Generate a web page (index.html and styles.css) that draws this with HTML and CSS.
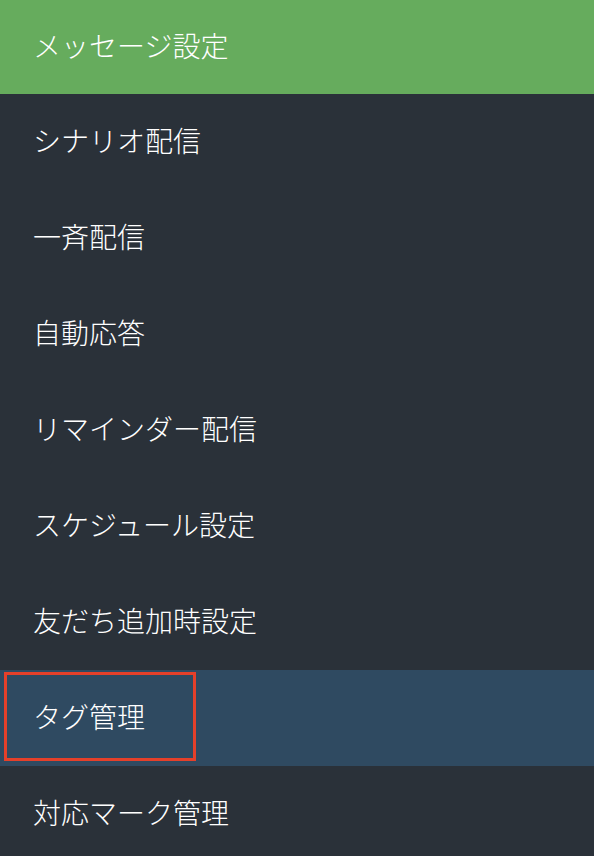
FILE: index.html
```html
<!DOCTYPE html>
<html lang="ja">
<head>
    <meta charset="UTF-8">
    <meta name="viewport" content="width=device-width, initial-scale=1.0">
    <title>メニュー</title>
    <link rel="stylesheet" href="styles.css">
</head>
<body>

    <div class="menu">
        <div class="menu-header">メッセージ設定</div>

        <!-- menu items -->
        <div class="menu-item">シナリオ配信</div>
        <div class="menu-item">一斉配信</div>
        <div class="menu-item">自動応答</div>
        <div class="menu-item">リマインダー配信</div>
        <div class="menu-item">スケジュール設定</div>
        <div class="menu-item">友だち追加時設定</div>
        <div class="menu-item active">
            <span class="highlight-box"></span>
            タグ管理
        </div>
        <div class="menu-item">対応マーク管理</div>
    </div>

</body>
</html>
```

FILE: styles.css
```css
body {
    margin: 0;
    padding: 0;
    background-color: #2a3139;
    font-family: "Noto Sans CJK JP", "Noto Sans", sans-serif;
    overflow: hidden;
}
.menu {
    width: 594px;
    display: flex;
    flex-direction: column;
}
.menu-header {
    height: 94px;
    box-sizing: border-box;
    display: flex;
    align-items: center;
    padding-left: 33px;
    padding-bottom: 5px;
    background-color: #66ac5d;
    color: #ffffff;
    font-size: 28px;
    font-weight: 300;
}
.menu-item {
    position: relative;
    height: 96px;
    box-sizing: border-box;
    display: flex;
    align-items: center;
    padding-left: 33px;
    padding-bottom: 5px;
    color: #ffffff;
    font-size: 28px;
    font-weight: 300;
}
.menu-item.active {
    background-color: #2f4a61;
}
.highlight-box {
    position: absolute;
    left: 4px;
    top: 2px;
    width: 186px;
    height: 83px;
    border: 3px solid #e5402a;
}
```
